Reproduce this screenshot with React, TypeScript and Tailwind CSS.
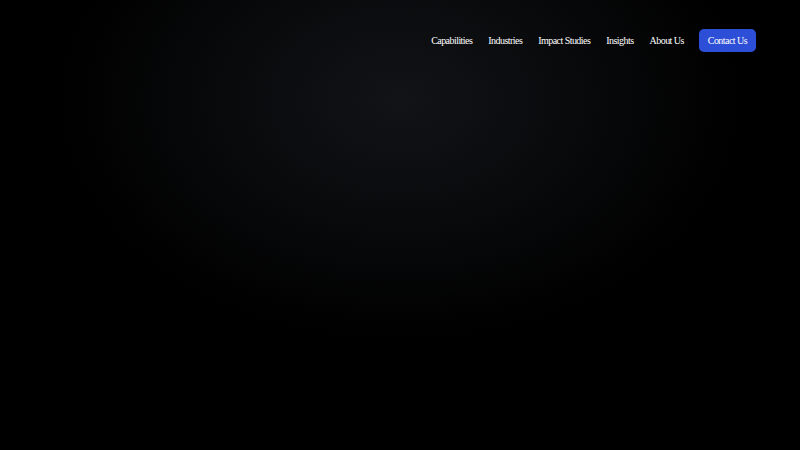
import React from 'react';

const links = ['Capabilities', 'Industries', 'Impact Studies', 'Insights', 'About Us'];

export default function App() {
  return (
    <div className="relative min-h-[450px] w-full overflow-hidden bg-black bg-[radial-gradient(ellipse_340px_240px_at_50%_100px,#111316_0%,#0a0b0d_45%,#000000_100%)] font-['Liberation_Serif',serif] text-white">
      {/* Top navigation */}
      <header className="flex items-center justify-end pr-[44px] pt-[29px]">
        <nav className="flex items-center gap-4 text-[10px] tracking-[-0.055em]">
          {links.map((label) => (
            <a key={label} href="#" className="leading-[23px] text-white hover:opacity-80">
              {label}
            </a>
          ))}
          <a
            href="#"
            className="ml-[-1px] flex h-[23px] items-center rounded-[5px] bg-[#2d4ed6] px-[9px] text-white"
          >
            Contact Us
          </a>
        </nav>
      </header>
    </div>
  );
}
